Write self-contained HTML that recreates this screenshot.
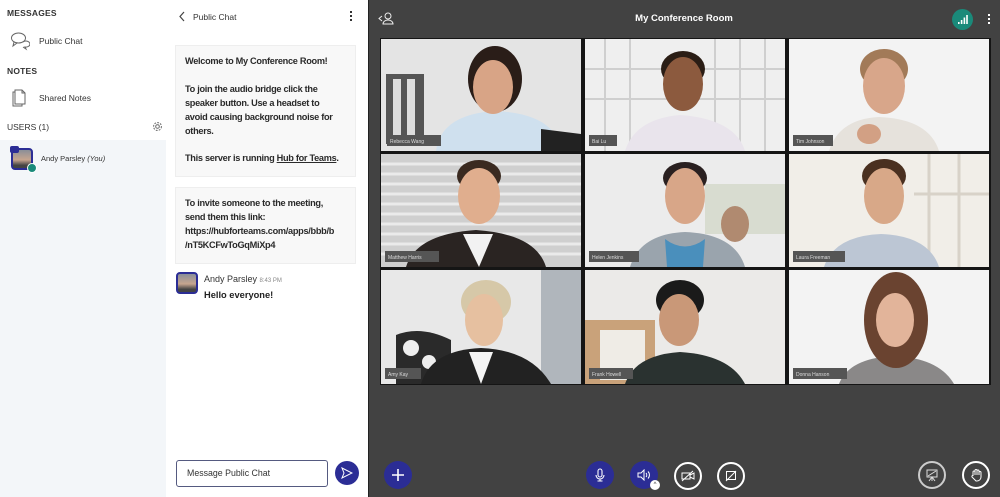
<!DOCTYPE html>
<html><head><meta charset="utf-8"><style>
*{margin:0;padding:0;box-sizing:border-box}
body{width:1000px;height:497px;overflow:hidden;font-family:"Liberation Sans",sans-serif;background:#fff;position:relative;color:#222}
.abs{position:absolute}
.hdr{font-size:8.5px;font-weight:bold;color:#333;letter-spacing:.2px}
.lbl{font-size:8.5px;color:#333}
.card{position:absolute;left:175px;width:181px;background:#f8f8f8;border:1px solid #eee;font-size:9.2px;font-weight:bold;color:#2a2a2a;line-height:13.9px;padding:9px 9px;letter-spacing:-.3px;white-space:nowrap;overflow:hidden}
.btn{position:absolute;width:28px;height:28px;border-radius:50%;display:flex;align-items:center;justify-content:center}
.blue{background:#2b2d95}
.ring{border:2px solid #fff}
</style></head><body>
<div class="abs" style="left:0;top:0;width:166px;height:497px;background:#fff"></div>
<div class="abs" style="left:0;top:140px;width:166px;height:357px;background:#f3f6f9"></div>
<div class="abs hdr" style="left:7px;top:8px">MESSAGES</div>
<svg class="abs" style="left:10px;top:31px" width="20" height="20" viewBox="0 0 20 20" fill="none" stroke="#666" stroke-width="1"><ellipse cx="8.5" cy="7" rx="7" ry="5"/><path d="M4 11 L3 15 L7 12"/><path d="M13 11 a4 3 0 1 1 2 5 l1 2 -3 -2"/></svg>
<div class="abs lbl" style="left:39px;top:36px">Public Chat</div>
<div class="abs hdr" style="left:7px;top:66px">NOTES</div>
<svg class="abs" style="left:11px;top:87px" width="16" height="20" viewBox="0 0 16 20" fill="none" stroke="#666" stroke-width="1"><path d="M4 3 H11 L14 6 V17 H4 Z"/><path d="M4 5 H2 V19 H11 V17"/><path d="M11 3 V6 H14"/></svg>
<div class="abs lbl" style="left:39px;top:93px">Shared Notes</div>
<div class="abs" style="left:7px;top:122px;font-size:8.5px;color:#333">USERS (1)</div>
<svg class="abs" style="left:152px;top:121px" width="11" height="11" viewBox="0 0 12 12" fill="none" stroke="#777" stroke-width="1.2"><circle cx="6" cy="6" r="2"/><circle cx="6" cy="6" r="4.3" stroke-dasharray="2 1.3"/></svg>
<div class="abs" style="left:11px;top:148px;width:22px;height:22px;border-radius:4px;border:2px solid #2b2d95;background:linear-gradient(#8a8f98,#c7a58f 55%,#444 85%)"></div>
<div class="abs" style="left:10px;top:146px;width:9px;height:7px;border-radius:2px;background:#2b2d95"></div>
<div class="abs" style="left:27px;top:163px;width:10px;height:10px;border-radius:50%;background:#1a8a7a;border:1px solid #fff"></div>
<div class="abs" style="left:41px;top:154px;font-size:7.5px;color:#333">Andy Parsley <i>(You)</i></div>
<svg class="abs" style="left:178px;top:11px" width="8" height="11" viewBox="0 0 8 11" fill="none" stroke="#444" stroke-width="1.2"><path d="M6 1 L2 5.5 L6 10"/></svg>
<div class="abs" style="left:193px;top:12px;font-size:8.5px;color:#333">Public Chat</div>
<div class="abs" style="left:350px;top:11px;width:2px;height:2px;background:#333;box-shadow:0 4px #333,0 8px #333"></div>
<div class="card" style="top:45px;height:132px">Welcome to My Conference Room!<br><br>To join the audio bridge click the<br>speaker button. Use a headset to<br>avoid causing background noise for<br>others.<br><br>This server is running <u>Hub for Teams</u>.</div>
<div class="card" style="top:187px;height:77px">To invite someone to the meeting,<br>send them this link:<br>https://hubforteams.com/apps/bbb/b<br>/nT5KCFwToGqMiXp4</div>
<div class="abs" style="left:176px;top:272px;width:22px;height:22px;border-radius:4px;border:2px solid #2b2d95;background:linear-gradient(#8a8f98,#c7a58f 55%,#444 85%)"></div>
<div class="abs" style="left:204px;top:274px;font-size:9px;color:#333">Andy Parsley <span style="font-size:6px;color:#888">8:43 PM</span></div>
<div class="abs" style="left:204px;top:290px;font-size:9.3px;font-weight:bold">Hello everyone!</div>
<div class="abs" style="left:176px;top:460px;width:152px;height:27px;border:1px solid #555a80;border-radius:3px;font-size:8.8px;color:#333;padding:7px 10px">Message Public Chat</div>
<div class="abs" style="left:335px;top:461px;width:24px;height:24px;border-radius:50%;background:#2b2d95"></div>
<svg class="abs" style="left:341px;top:467px" width="12" height="12" viewBox="0 0 12 12" fill="none" stroke="#fff" stroke-width="1"><path d="M1 1 L11 6 L1 11 L3 6 Z"/></svg>
<div class="abs" style="left:368px;top:0;width:632px;height:497px;background:#424242;border-left:1px solid #222"></div>
<svg class="abs" style="left:378px;top:11px" width="18" height="14" viewBox="0 0 18 14" fill="none" stroke="#eee" stroke-width="1"><path d="M4 5 L1 7.5 L4 10"/><circle cx="10" cy="5" r="3"/><path d="M5 13 a5 4 0 0 1 10 0 Z"/></svg>
<div class="abs" style="left:584px;top:13px;width:200px;text-align:center;font-size:9.5px;font-weight:bold;color:#fff">My Conference Room</div>
<div class="abs" style="left:952px;top:9px;width:21px;height:21px;border-radius:50%;background:#1a8a7a"></div>
<svg class="abs" style="left:957px;top:14px" width="11" height="11" viewBox="0 0 11 11" fill="#fff"><rect x="1" y="8" width="1.6" height="2"/><rect x="3.8" y="6" width="1.6" height="4"/><rect x="6.6" y="3.5" width="1.6" height="6.5"/><rect x="9.2" y="1" width="1.6" height="9"/></svg>
<div class="abs" style="left:988px;top:14px;width:2.4px;height:2.4px;background:#fff;box-shadow:0 4px #fff,0 8px #fff"></div>
<div class="abs" style="left:380px;top:38px;width:611px;height:347px;background:#151515"></div>
<svg class="abs" style="left:381px;top:39px" width="610" height="346">
<g><rect x="0" y="0" width="200" height="112" fill="#e4e4e4"/><rect x="5" y="35" width="38" height="70" fill="#555"/><rect x="12" y="40" width="8" height="60" fill="#ddd"/><rect x="26" y="40" width="8" height="60" fill="#ddd"/><path d="M55 112 Q60 75 115 72 Q175 75 180 112Z" fill="#cfe0ee"/><path d="M160 90 L200 95 V112 H160Z" fill="#222"/><ellipse cx="114" cy="40" rx="27" ry="33" fill="#2a1d18"/><ellipse cx="112" cy="48" rx="20" ry="27" fill="#d8a486"/><rect x="6" y="96" width="54" height="11" fill="#555"/><text x="9" y="104" font-size="5" fill="#ddd" font-family="Liberation Sans">Rebecca Wang</text></g>
<g transform="translate(204,0)"><rect width="200" height="112" fill="#efefef"/><g stroke="#cfcfcf" stroke-width="2"><path d="M20 0V112M45 0V112M130 0V112M155 0V112M180 0V112M0 30H200M0 60H200"/></g><path d="M40 112 Q50 80 95 76 Q150 80 160 112Z" fill="#e9e4ec"/><ellipse cx="98" cy="30" rx="22" ry="18" fill="#2a1d15"/><ellipse cx="98" cy="45" rx="20" ry="27" fill="#8c5a3e"/><rect x="4" y="96" width="28" height="11" fill="#555"/><text x="7" y="104" font-size="5" fill="#ddd" font-family="Liberation Sans">Bai Lu</text></g>
<g transform="translate(408,0)"><rect width="200" height="112" fill="#f3f3f3"/><path d="M40 112 Q50 80 90 78 Q140 80 150 112Z" fill="#e6e2dc"/><ellipse cx="95" cy="30" rx="24" ry="20" fill="#a27a58"/><ellipse cx="95" cy="47" rx="21" ry="28" fill="#d8a68a"/><ellipse cx="80" cy="95" rx="12" ry="10" fill="#d2a084"/><rect x="4" y="96" width="40" height="11" fill="#555"/><text x="7" y="104" font-size="5" fill="#ddd" font-family="Liberation Sans">Tim Johnson</text></g>
<g transform="translate(0,115)"><rect width="200" height="113" fill="#cfcfcf"/><g stroke="#eaeaea" stroke-width="3"><path d="M0 10H200M0 20H200M0 30H200M0 40H200M0 50H200M0 60H200M0 70H200M0 80H200M0 90H200M0 100H200"/></g><path d="M25 113 Q35 80 95 76 Q155 80 165 113Z" fill="#2a2422"/><path d="M82 80 L98 113 L112 80Z" fill="#f2f2f2"/><ellipse cx="98" cy="22" rx="22" ry="16" fill="#3a2a20"/><ellipse cx="98" cy="42" rx="21" ry="28" fill="#e0ae8e"/><rect x="4" y="97" width="54" height="11" fill="#555"/><text x="7" y="105" font-size="5" fill="#ddd" font-family="Liberation Sans">Matthew Harris</text></g>
<g transform="translate(204,115)"><rect width="200" height="113" fill="#ececec"/><rect x="120" y="30" width="80" height="50" fill="#d8dcd0"/><ellipse cx="150" cy="70" rx="14" ry="18" fill="#b08a70"/><path d="M45 113 Q55 80 100 78 Q150 80 160 113Z" fill="#9aa4ad"/><path d="M80 85 Q100 100 120 85 L118 113 H82Z" fill="#4a8fbc"/><ellipse cx="100" cy="24" rx="22" ry="16" fill="#2a2020"/><ellipse cx="100" cy="42" rx="20" ry="28" fill="#d8a688"/><rect x="4" y="97" width="50" height="11" fill="#555"/><text x="7" y="105" font-size="5" fill="#ddd" font-family="Liberation Sans">Helen Jenkins</text></g>
<g transform="translate(408,115)"><rect width="200" height="113" fill="#f1eee8"/><g stroke="#d8d2c8" stroke-width="3"><path d="M140 0V113M170 0V113M125 40H200"/></g><path d="M35 113 Q45 82 92 80 Q140 82 150 113Z" fill="#bcc6d4"/><ellipse cx="95" cy="22" rx="22" ry="17" fill="#4a3020"/><ellipse cx="95" cy="42" rx="20" ry="28" fill="#d8a888"/><rect x="4" y="97" width="52" height="11" fill="#555"/><text x="7" y="105" font-size="5" fill="#ddd" font-family="Liberation Sans">Laura Freeman</text></g>
<g transform="translate(0,231)"><rect width="200" height="114" fill="#e8e8e8"/><rect x="160" y="0" width="40" height="114" fill="#b0b6bc"/><path d="M15 114 L15 65 Q40 55 70 70 L70 114Z" fill="#2a2a2a"/><circle cx="30" cy="78" r="8" fill="#eee"/><circle cx="48" cy="92" r="7" fill="#eee"/><path d="M40 114 Q50 80 100 78 Q150 80 170 114Z" fill="#222"/><path d="M88 82 L100 114 L112 82Z" fill="#f5f5f5"/><ellipse cx="105" cy="32" rx="25" ry="22" fill="#d6c8a8"/><ellipse cx="103" cy="50" rx="19" ry="26" fill="#e6c0a0"/><rect x="4" y="98" width="36" height="11" fill="#555"/><text x="7" y="106" font-size="5" fill="#ddd" font-family="Liberation Sans">Amy Kay</text></g>
<g transform="translate(204,231)"><rect width="200" height="114" fill="#ebeae8"/><rect x="0" y="50" width="70" height="64" fill="#c9a27a"/><rect x="15" y="60" width="45" height="50" fill="#efece6"/><path d="M40 114 Q50 85 95 82 Q145 85 160 114Z" fill="#2a3230"/><ellipse cx="95" cy="30" rx="24" ry="20" fill="#1a1a1a"/><ellipse cx="94" cy="50" rx="20" ry="26" fill="#c99878"/><rect x="4" y="98" width="44" height="11" fill="#555"/><text x="7" y="106" font-size="5" fill="#ddd" font-family="Liberation Sans">Frank Howell</text></g>
<g transform="translate(408,231)"><rect width="200" height="114" fill="#f3f3f3"/><path d="M50 114 Q60 88 105 86 Q150 88 165 114Z" fill="#8a8888"/><ellipse cx="107" cy="50" rx="32" ry="48" fill="#6a4330"/><ellipse cx="106" cy="50" rx="19" ry="27" fill="#e2b49a"/><rect x="4" y="98" width="54" height="11" fill="#555"/><text x="7" y="106" font-size="5" fill="#ddd" font-family="Liberation Sans">Donna Hanson</text></g>
</svg>
<div class="btn blue" style="left:384px;top:461px"><svg width="14" height="14" viewBox="0 0 14 14" stroke="#fff" stroke-width="1.6"><path d="M7 1V13M1 7H13"/></svg></div>
<div class="btn blue" style="left:586px;top:461px"><svg width="12" height="14" viewBox="0 0 12 14" fill="none" stroke="#fff" stroke-width="1.1"><rect x="4" y="1" width="4" height="8" rx="2"/><path d="M2 7a4 4 0 0 0 8 0M6 11V13M3.5 13H8.5"/></svg></div>
<div class="btn blue" style="left:630px;top:461px"><svg width="14" height="12" viewBox="0 0 14 12" fill="none" stroke="#fff" stroke-width="1"><path d="M1 4H4L7 1V11L4 8H1Z"/><path d="M9 4a3 3 0 0 1 0 4M11 2.5a5 5 0 0 1 0 7"/></svg></div>
<div class="abs" style="left:650px;top:480px;width:10px;height:10px;border-radius:50%;background:#fff;font-size:6px;color:#333;text-align:center;line-height:10px">^</div>
<div class="btn ring" style="left:674px;top:462px"><svg width="14" height="12" viewBox="0 0 14 12" fill="none" stroke="#fff" stroke-width="1"><rect x="1" y="3" width="8" height="6"/><path d="M9 5L13 3V9L9 7M1 11L12 1"/></svg></div>
<div class="btn ring" style="left:717px;top:462px"><svg width="12" height="12" viewBox="0 0 12 12" fill="none" stroke="#fff" stroke-width="1"><rect x="1.5" y="1.5" width="9" height="8"/><path d="M1 11L11 1"/></svg></div>
<div class="btn ring" style="left:918px;top:461px;border-color:#ccc"><svg width="14" height="14" viewBox="0 0 14 14" fill="none" stroke="#ddd" stroke-width="1"><rect x="2" y="2" width="10" height="7"/><path d="M7 9V13M4 13L7 9L10 13M3 8L11 3"/></svg></div>
<div class="btn ring" style="left:962px;top:461px"><svg width="13" height="14" viewBox="0 0 13 14" fill="none" stroke="#fff" stroke-width="1"><path d="M3 8V4a1 1 0 0 1 2 0V7V2.5a1 1 0 0 1 2 0V7V3a1 1 0 0 1 2 0V7V4.5a1 1 0 0 1 2 0V9a4 4 0 0 1-4 4H6L2 9a1 1 0 0 1 1-1.5Z"/></svg></div>
</body></html>
